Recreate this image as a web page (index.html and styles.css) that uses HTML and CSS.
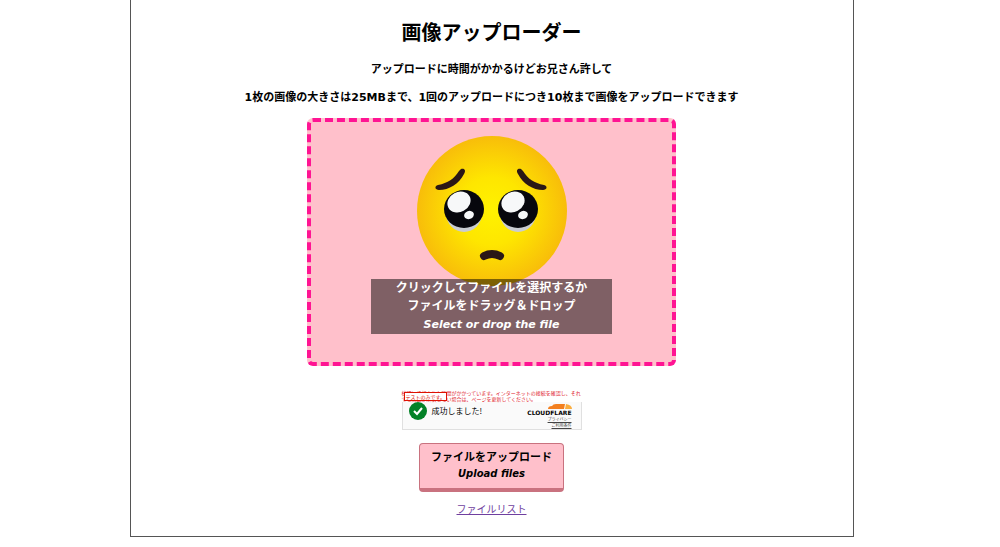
FILE: index.html
```
<!DOCTYPE html>
<html lang="ja">
<head>
  <meta charset="UTF-8">
  <meta name="viewport" content="width=device-width, initial-scale=1.0">
  <title>画像アップローダー</title>
  <link rel="stylesheet" href="styles.css">
</head>
<body>
  <main class="container">
    <h1>画像アップローダー</h1>
    <p class="note">アップロードに時間がかかるけどお兄さん許して</p>
    <p class="note">1枚の画像の大きさは25MBまで、1回のアップロードにつき10枚まで画像をアップロードできます</p>

    <form class="upload-form">
      <label class="drop-area" for="files">
        <svg class="face" viewBox="0 0 150 150" aria-hidden="true">
          <defs>
            <radialGradient id="skin" cx="50%" cy="50%" r="50%">
              <stop offset="0" stop-color="#fff200"/>
              <stop offset="0.45" stop-color="#fee600"/>
              <stop offset="1" stop-color="#f8bd0a"/>
            </radialGradient>
          </defs>
          <circle cx="75" cy="75" r="75" fill="url(#skin)"/>
          <!-- eyebrows -->
          <path d="M44 33 C48 32 49 35 47 38 C42 48 32 54 22 54 C18 54 17 50 21 49 C31 47 37 43 42 35 Z" fill="#2a1716"/>
          <path d="M104 33 C100 32 99 35 101 38 C106 48 116 54 126 54 C130 54 131 50 127 49 C117 47 111 43 106 35 Z" fill="#2a1716"/>
          <!-- eyes -->
          <ellipse cx="47" cy="77" rx="18" ry="19" fill="#c9ccd2"/>
          <ellipse cx="101" cy="77" rx="18" ry="19" fill="#c9ccd2"/>
          <ellipse cx="47" cy="73" rx="20" ry="19" fill="#07070d"/>
          <ellipse cx="101" cy="73" rx="20" ry="19" fill="#07070d"/>
          <ellipse cx="42" cy="66" rx="12" ry="10" fill="#f7f8f9" transform="rotate(-28 42 66)"/>
          <ellipse cx="96" cy="66" rx="12" ry="10" fill="#f7f8f9" transform="rotate(-28 96 66)"/>
          <ellipse cx="52" cy="79" rx="5" ry="4" fill="#f7f8f9" transform="rotate(-20 52 79)"/>
          <ellipse cx="106" cy="79" rx="5" ry="4" fill="#f7f8f9" transform="rotate(-20 106 79)"/>
          <!-- mouth -->
          <path d="M67 120 Q75 116 83 120" fill="none" stroke="#2a1716" stroke-width="8" stroke-linecap="round"/>
        </svg>
        <span class="drop-text">
          クリックしてファイルを選択するか<br>
          ファイルをドラッグ＆ドロップ<br>
          <em>Select or drop the file</em>
        </span>
      </label>
      <input class="file-input" type="file" id="files" accept="image/*" multiple>

      <div class="turnstile">
        <p class="slow">検証に予想よりも時間がかかっています。インターネットの接続を確認し、それでも問題が解決しない場合は、ページを更新してください。</p>
        <span class="test-only">テストのみです。</span>
        <div class="result">
          <svg class="check" viewBox="0 0 18 18" aria-hidden="true">
            <circle cx="9" cy="9" r="9" fill="#038127"/>
            <path d="M5 9 L8 12 L13 6" fill="none" stroke="#fff" stroke-width="2"/>
          </svg>
          <span class="success">成功しました!</span>
          <div class="brand">
            <svg class="cloud" viewBox="0 0 24 5" aria-hidden="true">
              <path d="M0 5 Q0 2 4 2 Q5 0 8 0 L17 0 L16 5 Z" fill="#f38020"/>
              <path d="M17 5 L18 0 Q24 1 24 5 Z" fill="#faae40"/>
            </svg>
            <span class="brand-name">CLOUDFLARE</span>
            <a href="#">プライバシー</a>
            <a href="#">ご利用条件</a>
          </div>
        </div>
      </div>

      <button class="upload" type="submit">ファイルをアップロード<br><em>Upload files</em></button>
    </form>
    <a class="list-link" href="#">ファイルリスト</a>
  </main>
</body>
</html>
```
FILE: styles.css
```
* {
  box-sizing: border-box;
}

body {
  margin: 0;
  padding-right: 17px;
  font-family: "DejaVu Sans", "Noto Sans CJK JP", sans-serif;
  color: #000;
  background: #fff;
}

.container {
  width: 74%;
  max-width: 724px;
  margin: 0 auto;
  padding: 17px 0 18px;
  border: 1px solid #555;
  border-top: 0;
  text-align: center;
}

h1 {
  margin: 0 0 13px;
  font-size: 20px;
  line-height: 32px;
}

.note {
  margin: 0 0 12px;
  font-size: 11px;
  font-weight: bold;
  line-height: 16px;
}

.upload-form {
  display: flex;
  flex-direction: column;
  align-items: center;
}

.drop-area {
  position: relative;
  display: block;
  width: 51%;
  padding: 14px 0 76px;
  border: 4px dashed #ff1493;
  border-radius: 6px;
  background: pink;
  cursor: pointer;
}

.face {
  display: block;
  width: 150px;
  height: 150px;
  margin: 0 auto;
}

.drop-text {
  position: absolute;
  right: 60px;
  bottom: 28px;
  left: 60px;
  font-size: 12px;
  font-weight: bold;
  line-height: 18px;
  color: #fff;
  background: rgba(0, 0, 0, .5);
}

.drop-text em {
  font-size: 11px;
}

.file-input {
  position: absolute;
  width: 1px;
  height: 1px;
  opacity: 0;
}

.turnstile {
  position: relative;
  width: 180px;
  margin: 24px 0 13px;
  font-family: "Noto Sans CJK JP", sans-serif;
  text-align: left;
}

.slow {
  margin: 0;
  font-size: 5px;
  line-height: 6px;
  color: #e0202c;
}

.test-only {
  position: absolute;
  top: 2px;
  left: 2px;
  padding: 0 1px;
  border: 1px solid #de1303;
  font-size: 5px;
  line-height: 7px;
  color: #de1303;
  background: #fff;
}

.result {
  display: flex;
  align-items: center;
  gap: 5px;
  height: 28px;
  padding: 0 9px 0 6px;
  border: 1px solid #e0e0e0;
  border-top: 0;
  background: #fafafa;
}

.check {
  width: 18px;
  height: 18px;
  margin-bottom: 10px;
}

.success {
  margin-bottom: 10px;
  font-size: 8px;
  line-height: 12px;
}

.brand {
  display: flex;
  flex-direction: column;
  align-items: flex-end;
  margin-left: auto;
}

.cloud {
  width: 24px;
  height: 5px;
}

.brand-name {
  font-family: "DejaVu Sans", sans-serif;
  font-size: 6px;
  font-weight: bold;
  line-height: 7px;
}

.brand a {
  font-size: 4px;
  line-height: 6px;
  color: #444;
}

.upload {
  padding: 6px 11px;
  border: 1px solid #c9727f;
  border-bottom-width: 4px;
  border-radius: 4px;
  font-family: inherit;
  font-size: 11px;
  font-weight: bold;
  line-height: 16px;
  color: #000;
  background: pink;
  cursor: pointer;
}

.upload em {
  font-size: 10px;
}

.list-link {
  display: inline-block;
  margin-top: 10px;
  font-size: 10px;
  line-height: 16px;
  color: #6f3f9f;
}
```
